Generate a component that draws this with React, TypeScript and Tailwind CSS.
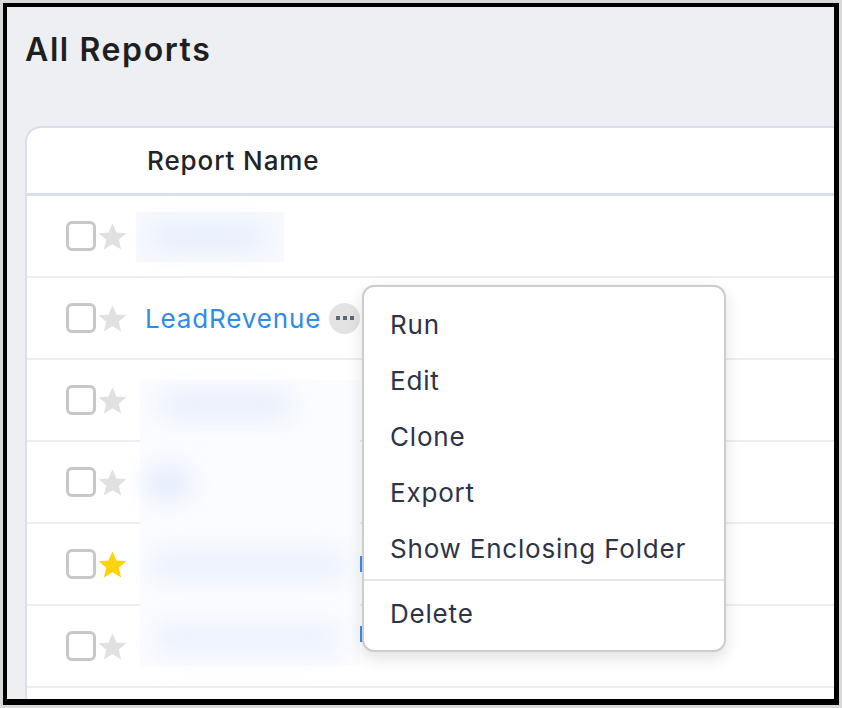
import React from "react";

const font = { fontFamily: "Inter, 'Noto Sans', sans-serif" };

type Row = { name?: string; starred?: boolean };

const rows: Row[] = [
  {},
  { name: "LeadRevenue" },
  {},
  {},
  { starred: true },
  {},
];

function Star({ on }: { on?: boolean }) {
  return (
    <svg viewBox="0 0 24 24" className="h-[31px] w-[31px]">
      <path
        d="M12 1.8l3.1 7.1 7.6.6-5.8 5 1.8 7.5L12 18l-6.7 4 1.8-7.5-5.8-5 7.6-.6z"
        fill={on ? "#ffd30b" : "#e1e1e1"}
      />
    </svg>
  );
}

function Checkbox() {
  return <div className="h-[30px] w-[30px] rounded-[6px] border-[3px] border-[#c8c8c8] bg-white" />;
}

function MoreButton() {
  return (
    <div className="ml-[8px] flex h-[31px] w-[31px] items-center justify-center gap-[3px] rounded-full bg-[#e3e3e3]">
      <span className="h-[4px] w-[4px] bg-[#5b6677]" />
      <span className="h-[4px] w-[4px] bg-[#5b6677]" />
      <span className="h-[4px] w-[4px] bg-[#5b6677]" />
    </div>
  );
}

function Menu() {
  const items = ["Run", "Edit", "Clone", "Export", "Show Enclosing Folder"];
  return (
    <div className="absolute left-[355px] top-[278px] w-[364px] rounded-[12px] border-2 border-[#cdcdcd] bg-white py-[9px] shadow-[0_6px_16px_rgba(0,0,0,0.12)]">
      {items.map((it) => (
        <div
          key={it}
          className="flex h-[56px] items-center pl-[26px] text-[26px] tracking-[0.8px] text-[#2d3447]"
        >
          {it}
        </div>
      ))}
      <div className="mb-[4px] mt-[3px] h-[2px] bg-[#e3e5e9]" />
      <div className="flex h-[56px] items-center pl-[26px] text-[26px] tracking-[0.8px] text-[#2d3447]">
        Delete
      </div>
    </div>
  );
}

export default function App() {
  return (
    <div className="h-[708px] w-[842px] bg-[#d9d9d9] p-[3px]" style={font}>
      <div className="h-full w-full border-b-[6px] border-l-4 border-r-[5px] border-t-4 border-black">
        <div className="relative h-full w-full overflow-hidden bg-[#eeeff3]">
          <h1 className="pl-[18px] pt-[25px] text-[32px] font-semibold leading-[36px] tracking-[1.6px] text-[#1e1f22]">
            All Reports
          </h1>

          <div className="ml-[18px] mt-[58px] w-[860px] rounded-tl-[16px] border-l-2 border-t-2 border-[#d6dfeb] bg-white">
            <div className="flex h-[68px] items-center border-b-[3px] border-[#d6e0ec] pl-[120px] text-[26px] font-medium tracking-[0.9px] text-[#222327]">
              Report Name
            </div>
            {rows.map((r, i) => (
              <div key={i} className="flex h-[82px] items-center border-b-2 border-[#eceef2] pl-[39px]">
                <Checkbox />
                <div className="ml-[1px]">
                  <Star on={r.starred} />
                </div>
                {r.name ? (
                  <div className="ml-[17px] flex items-center">
                    <span className="text-[26px] tracking-[0.85px] text-[#2f8bec]">{r.name}</span>
                    <MoreButton />
                  </div>
                ) : null}
              </div>
            ))}
            <div className="h-[20px]" />
          </div>

          {/* redacted names */}
          <div className="absolute left-[129px] top-[205px] flex h-[50px] w-[148px] items-center bg-[#f7f9fe]">
            <div className="ml-[14px] h-[26px] w-[115px] rounded-full bg-[#e6eefc] blur-md" />
          </div>
          <div className="absolute left-[133px] top-[373px] h-[286px] w-[220px] bg-[#fbfcff]">
            <div className="ml-[18px] mt-[10px] h-[30px] w-[135px] rounded-full bg-[#e8effc] blur-md" />
            <div className="ml-[4px] mt-[45px] h-[36px] w-[48px] rounded-full bg-[#e4ecfc] blur-md" />
            <div className="ml-[8px] mt-[50px] h-[28px] w-[200px] rounded-full bg-[#e9f0fd] blur-md" />
            <div className="ml-[12px] mt-[45px] h-[30px] w-[190px] rounded-full bg-[#ebf1fd] blur-md" />
          </div>
          <div className="absolute left-[353px] top-[549px] h-[16px] w-[3px] bg-[#3b8ff0]" />
          <div className="absolute left-[353px] top-[619px] h-[16px] w-[3px] bg-[#3b8ff0]" />

          <Menu />
        </div>
      </div>
    </div>
  );
}
